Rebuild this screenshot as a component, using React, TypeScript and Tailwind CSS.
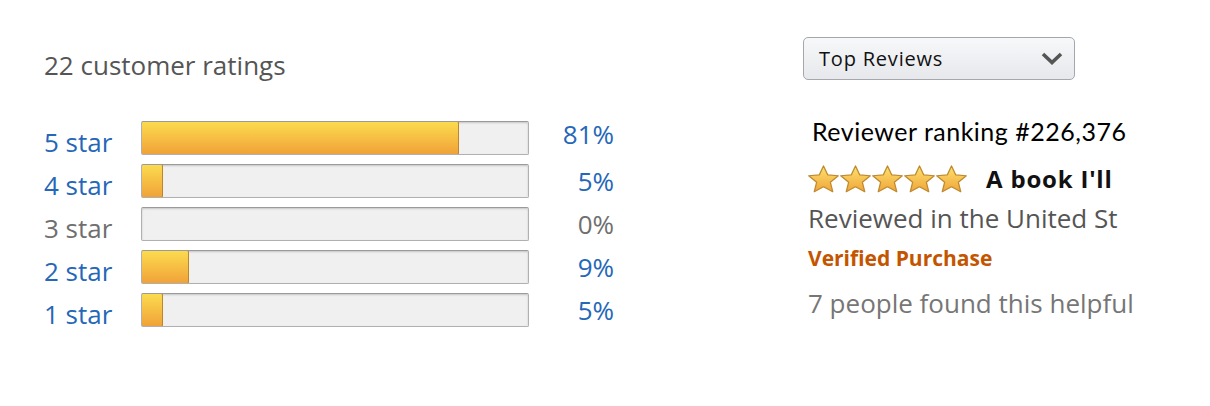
type Row = { label: string; pct: number; fill: number };

const rows: Row[] = [
  { label: "5 star", pct: 81, fill: 318 },
  { label: "4 star", pct: 5, fill: 22 },
  { label: "3 star", pct: 0, fill: 0 },
  { label: "2 star", pct: 9, fill: 48 },
  { label: "1 star", pct: 5, fill: 22 },
];

function Star() {
  return (
    <svg width="31" height="28" viewBox="1 0.3 22 21.7" preserveAspectRatio="none">
      <defs>
        <linearGradient id="sg" x1="0" y1="0" x2="0" y2="1">
          <stop offset="0" stopColor="#fde26e" />
          <stop offset="1" stopColor="#f0a53a" />
        </linearGradient>
      </defs>
      <path
        d="M12 1l3.05 7 7.45.65-5.65 5 1.7 7.35L12 17.15 5.45 21l1.7-7.35-5.65-5 7.45-.65z"
        fill="url(#sg)"
        stroke="#bf8a2e"
        strokeWidth="0.9"
        strokeLinejoin="round"
      />
    </svg>
  );
}

function Chevron() {
  return (
    <svg width="22" height="13" viewBox="0 0 22 13">
      <polyline points="2,2 11,10.5 20,2" fill="none" stroke="#555" strokeWidth="3.6" />
    </svg>
  );
}

export default function App() {
  return (
    <div className="flex h-[406px] w-[1210px] bg-white font-['Open_Sans',sans-serif]">
      <div className="w-[759px] shrink-0 pl-[44px] pt-[47px]">
        <div className="text-[26px] leading-[36px] text-[#555]">22 customer ratings</div>
        <div className="mt-[38px] flex flex-col gap-[9px]">
          {rows.map((r, i) => {
            const zero = r.pct === 0;
            const color = zero ? "text-[#6f6f6f]" : "text-[#2567b8]";
            return (
              <div key={r.label} className="flex h-[34px] items-center">
                <span className={`mt-[8px] w-[97px] text-[26px] leading-[34px] ${color}`}>
                  {r.label}
                </span>
                <div className="relative h-[34px] w-[388px] overflow-hidden rounded-[2px] border border-[#b0b0b0] border-t-[#9a9a9a] bg-[#f0f0f0] shadow-[inset_0_1px_2px_rgba(0,0,0,0.18)]">
                  {r.fill > 0 && (
                    <div
                      className="absolute inset-y-[-1px] left-[-1px] rounded-[2px] border border-[#bd8629] bg-gradient-to-b from-[#fbdb4f] to-[#f0a238]"
                      style={{ width: r.fill }}
                    />
                  )}
                </div>
                <span
                  className={`w-[85px] text-right text-[26px] leading-[34px] ${color} ${
                    i === 0 ? "mb-[8px]" : ""
                  }`}
                >
                  {r.pct}%
                </span>
              </div>
            );
          })}
        </div>
      </div>

      <div className="w-[420px] shrink-0 whitespace-nowrap pl-[44px] pt-[37px]">
        <div className="flex h-[43px] w-[272px] items-center justify-between rounded-[5px] border border-[#a4a8ad] bg-gradient-to-b from-[#f7f8fa] to-[#e6e8eb] pl-[15px] pr-[11px]">
          <span className="text-[20px] tracking-[0.8px] text-[#111]">Top Reviews</span>
          <Chevron />
        </div>

        <div className="mt-[36px] pl-[9px] font-['Lato',sans-serif] text-[25px] leading-[30px] tracking-[0.5px] text-black">
          Reviewer ranking #226,376
        </div>

        <div className="mt-[18px] flex h-[30px] items-center pl-[5px]">
          <div className="flex gap-[1px]">
            {[0, 1, 2, 3, 4].map((s) => (
              <Star key={s} />
            ))}
          </div>
          <span className="ml-[19px] text-[24px] font-bold tracking-[0.8px] text-[#111]">
            A book I'll
          </span>
        </div>

        <div className="mt-[7px] pl-[5px] text-[26px] leading-[34px] text-[#555]">
          Reviewed in the United St
        </div>
        <div className="mt-[9px] pl-[5px] text-[21px] font-bold leading-[28px] text-[#c45500]">
          Verified Purchase
        </div>
        <div className="mt-[14px] pl-[5px] text-[26px] leading-[34px] text-[#767676]">
          7 people found this helpful
        </div>
      </div>
    </div>
  );
}
